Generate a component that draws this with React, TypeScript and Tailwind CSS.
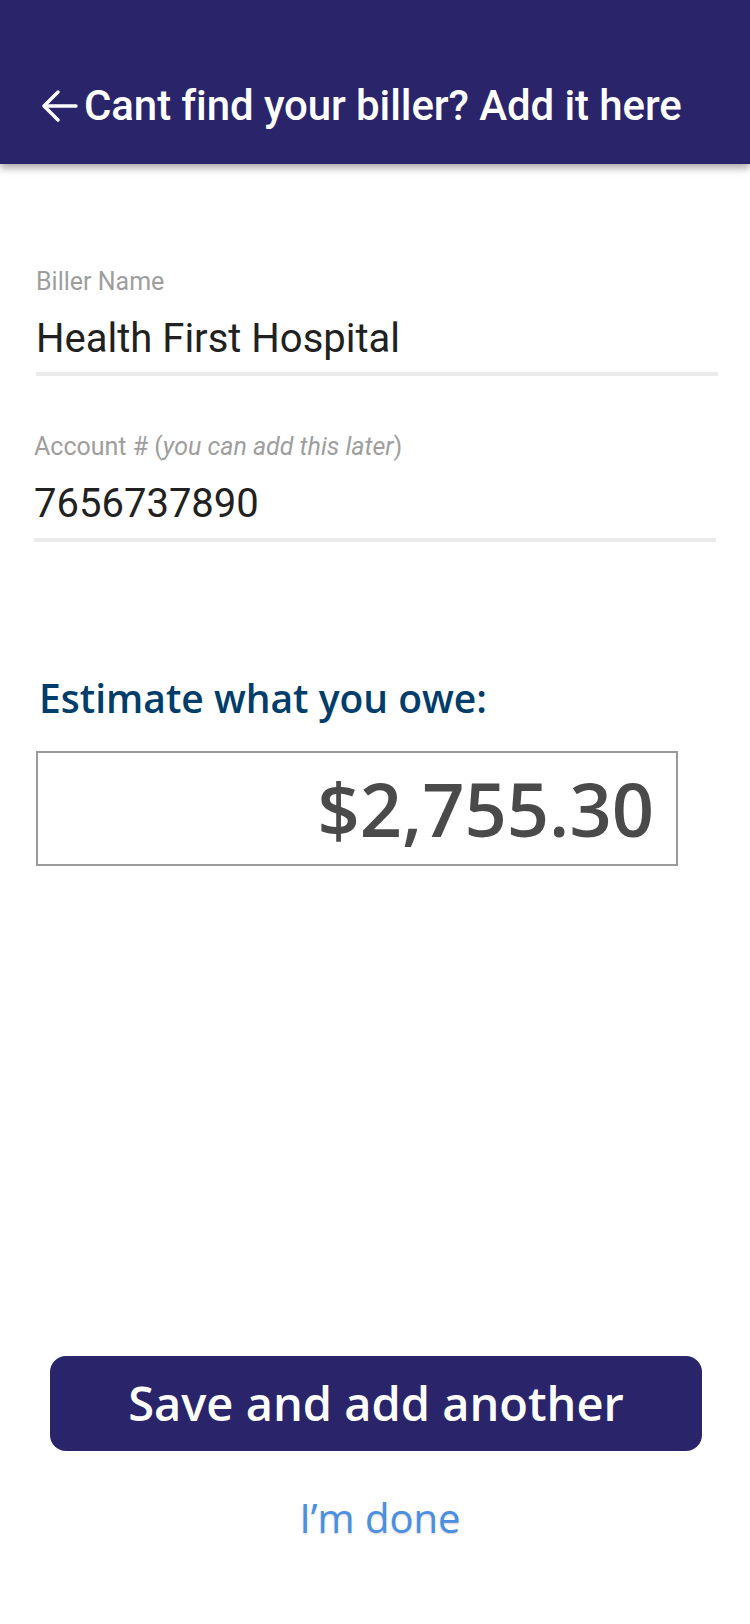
export default function App() {
  return (
    <div className="w-[750px] h-[1624px] bg-white flex flex-col relative overflow-hidden">
      {/* header */}
      <div className="h-[164px] bg-[#2a246a] shadow-[0_4px_8px_rgba(0,0,0,0.35)] flex items-end pb-[34px] pl-[42px] relative z-10">
        <div className="flex items-center gap-[6px]">
          <svg width="36" height="32" viewBox="0 0 36 32" fill="none" stroke="white" strokeWidth="3.4" strokeLinecap="round" strokeLinejoin="round">
            <path d="M34 16H3" />
            <path d="M16 2L2 16l14 14" />
          </svg>
          <span className="text-white text-[42px] leading-[48px] font-medium font-['Roboto',sans-serif] tracking-[-0.1px]">
            Cant find your biller? Add it here
          </span>
        </div>
      </div>

      {/* fields */}
      <div className="pl-[36px] pr-[32px] pt-[103px] font-['Roboto',sans-serif]">
        <div className="text-[25px] text-[#9e9e9e] leading-[30px]">Biller Name</div>
        <div className="text-[40px] text-[#212121] leading-[48px] mt-[18px] pb-[9px] border-b-[4px] border-[#ebebeb]">
          Health First Hospital
        </div>

        <div className="-ml-[2px] mr-[2px] mt-[56px]">
          <div className="text-[25px] text-[#9e9e9e] leading-[30px]">
            Account # (<span className="italic">you can add this later</span>)
          </div>
          <div className="text-[40px] text-[#212121] leading-[48px] mt-[18px] pb-[10px] border-b-[4px] border-[#ebebeb]">
            7656737890
          </div>
        </div>
      </div>

      {/* estimate */}
      <div className="pl-[39px] mt-[132px] font-['Open_Sans',sans-serif]">
        <div className="text-[39px] font-semibold text-[#003d6b] leading-[48px]">Estimate what you owe:</div>
      </div>
      <div className="ml-[36px] mt-[29px] w-[642px] h-[115px] border-2 border-[#9b9b9b] flex items-center justify-end pr-[22px] font-['Open_Sans',sans-serif]">
        <span className="text-[74px] font-semibold text-[#4a4a4a] leading-none">$2,755.30</span>
      </div>

      {/* actions */}
      <div className="mt-auto mb-[82px] flex flex-col items-center font-['Open_Sans',sans-serif]">
        <button className="ml-[2px] w-[652px] h-[95px] rounded-[16px] bg-[#2a246a] text-white text-[47px] font-semibold">
          Save and add another
        </button>
        <button className="ml-[10px] mt-[43px] text-[40px] leading-[48px] text-[#4a90e2] [text-shadow:0_1px_2px_rgba(0,0,0,0.2)]">
          I’m done
        </button>
      </div>
    </div>
  );
}
